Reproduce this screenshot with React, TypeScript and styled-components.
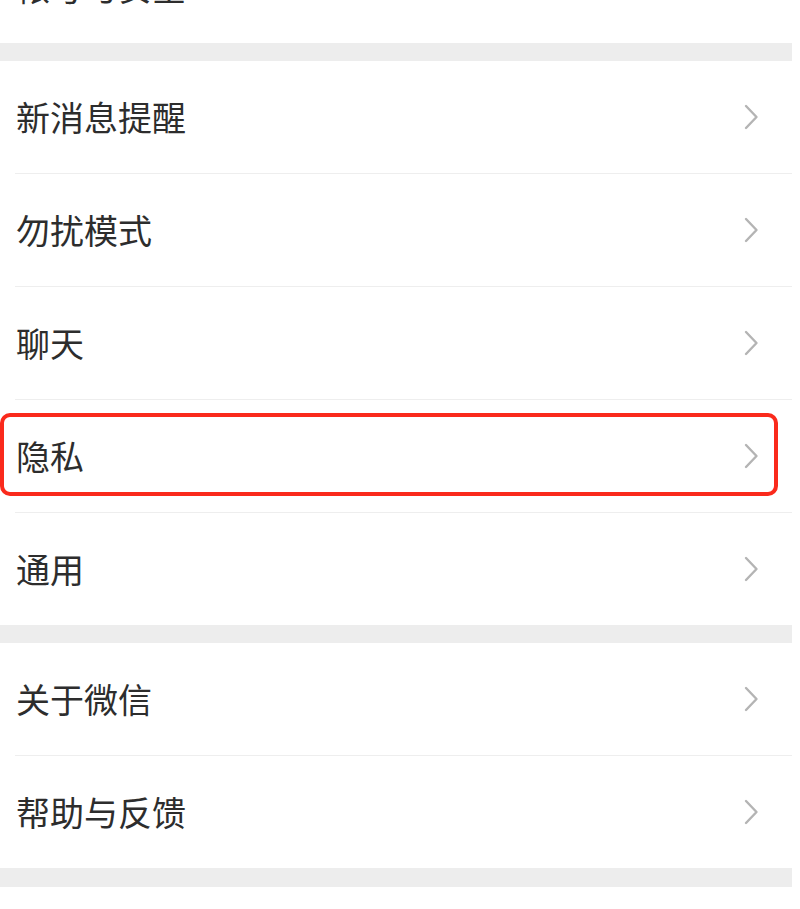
import React from 'react';
import styled, { createGlobalStyle } from 'styled-components';

const GlobalStyle = createGlobalStyle`
  html, body {
    margin: 0;
    padding: 0;
    background: #ffffff;
  }
  body {
    font-family: "Noto Sans CJK SC", "Noto Sans", sans-serif;
    overflow: hidden;
  }
`;

const Page = styled.div`
  width: 792px;
  margin-top: -69px; /* the first row is scrolled off the top */
  background: #ffffff;
`;

const Band = styled.div<{ $h: number }>`
  height: ${(p) => p.$h}px;
  background: #ededed;
`;

const Group = styled.div`
  background: #ffffff;
`;

const Row = styled.div`
  position: relative;
  padding-left: 15px;
  display: flex;

  &:last-child > div {
    border-bottom: none;
    height: 112px;
  }
`;

const RowInner = styled.div`
  flex: 1;
  height: 112px;
  box-sizing: content-box;
  display: flex;
  align-items: center;
  justify-content: space-between;
  padding-left: 1px;
  padding-right: 33px;
  border-bottom: 1px solid #eeeeee;
`;

const Label = styled.span`
  font-size: 34px;
  color: #2d2d2d;
  line-height: 1;
`;

const Chevron = styled.svg`
  width: 15px;
  height: 26px;
  flex-shrink: 0;
`;

const Highlight = styled.div`
  position: absolute;
  left: 0;
  right: 14px;
  top: 13px;
  bottom: 17px;
  border: 4px solid #fa2a1c;
  border-radius: 10px;
  pointer-events: none;
`;

const Arrow = () => (
  <Chevron viewBox="0 0 15 26">
    <path d="M2 2 L12.5 13 L2 24" fill="none" stroke="#b4b4b4" strokeWidth="2.4" strokeLinecap="round" strokeLinejoin="round" />
  </Chevron>
);

interface ItemProps {
  label: string;
  marked?: boolean;
}

const Item: React.FC<ItemProps> = ({ label, marked }) => (
  <Row>
    <RowInner>
      <Label>{label}</Label>
      <Arrow />
    </RowInner>
    {marked && <Highlight />}
  </Row>
);

const App: React.FC = () => (
  <>
    <GlobalStyle />
    <Page>
      <Group>
        <Item label="帐号与安全" />
      </Group>
      <Band $h={18} />
      <Group>
        <Item label="新消息提醒" />
        <Item label="勿扰模式" />
        <Item label="聊天" />
        <Item label="隐私" marked />
        <Item label="通用" />
      </Group>
      <Band $h={18} />
      <Group>
        <Item label="关于微信" />
        <Item label="帮助与反馈" />
      </Group>
      <Band $h={19} />
    </Page>
  </>
);

export default App;
